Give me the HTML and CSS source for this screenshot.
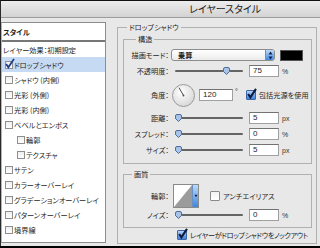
FILE: index.html
```html
<!DOCTYPE html>
<html>
<head>
    <meta charset="utf-8">
    <title>レイヤースタイル</title>
    <link rel="stylesheet" href="styles.css">
</head>
<body>
    <div class="window">
        <div class="titlebar">レイヤースタイル</div>
        <div class="main">
            <div class="styles">
                <div class="styles-head">スタイル</div>
                <div class="style-item plain">レイヤー効果：初期設定</div>
                <div class="style-item selected">
                    <span class="box"><svg class="tick" viewBox="0 0 8 8"><path d="M1 3.5 L3 6.5 L8 -1"/></svg></span>ドロップシャドウ
                </div>
                <div class="style-item"><span class="box"></span>シャドウ (内側)</div>
                <div class="style-item"><span class="box"></span>光彩 (外側)</div>
                <div class="style-item"><span class="box"></span>光彩 (内側)</div>
                <div class="style-item"><span class="box"></span>ベベルとエンボス</div>
                <div class="style-item indent"><span class="box"></span>輪郭</div>
                <div class="style-item indent"><span class="box"></span>テクスチャ</div>
                <div class="style-item"><span class="box"></span>サテン</div>
                <div class="style-item"><span class="box"></span>カラーオーバーレイ</div>
                <div class="style-item"><span class="box"></span>グラデーションオーバーレイ</div>
                <div class="style-item"><span class="box"></span>パターンオーバーレイ</div>
                <div class="style-item"><span class="box"></span>境界線</div>
            </div>

            <div class="options">
                <fieldset class="group">
                    <legend>ドロップシャドウ</legend>

                    <fieldset class="sub sub-structure">
                        <legend>構造</legend>
                        <div class="rows">
                            <div class="row">
                                <span class="label">描画モード：</span>
                                <div class="select">
                                    <span class="select-text">乗算</span>
                                    <span class="stepper"><svg viewBox="0 0 5 9"><path d="M2.5 0.5 L4.5 3.5 H0.5 Z M2.5 8.5 L4.5 5.5 H0.5 Z"/></svg></span>
                                </div>
                                <span class="swatch"></span>
                            </div>
                            <div class="row">
                                <span class="label">不透明度：</span>
                                <div class="slider"><div class="travel"><svg class="thumb" style="left: 75%" viewBox="0 0 7 8"><path d="M3.5 7.5 L0.5 4.5 V2 Q0.5 0.5 2 0.5 H5 Q6.5 0.5 6.5 2 V4.5 Z"/></svg></div></div>
                                <span class="field">75</span>
                                <span class="unit">%</span>
                            </div>
                            <div class="row row-angle">
                                <span class="label">角度：</span>
                                <svg class="dial" viewBox="0 0 23 23">
                                    <defs>
                                        <radialGradient id="dialFill" cx="40%" cy="35%" r="70%">
                                            <stop offset="0" stop-color="#ffffff"/>
                                            <stop offset="1" stop-color="#d6d6d6"/>
                                        </radialGradient>
                                    </defs>
                                    <circle cx="11.5" cy="11.5" r="11" fill="url(#dialFill)" stroke="#9a9a9a"/>
                                    <line x1="11.5" y1="11.5" x2="7" y2="3.7" stroke="#4a4a4a"/>
                                    <circle cx="11.5" cy="11.5" r="0.9" fill="#4a4a4a"/>
                                </svg>
                                <span class="field field-angle">120</span>
                                <span class="degree">°</span>
                                <span class="check-label global">
                                    <span class="aqua checked"><svg class="tick" viewBox="0 0 8 8"><path d="M1 3.5 L3 6.5 L8 -1"/></svg></span>包括光源を使用
                                </span>
                            </div>
                            <div class="row">
                                <span class="label">距離：</span>
                                <div class="slider"><div class="travel"><svg class="thumb" style="left: 0%" viewBox="0 0 7 8"><path d="M3.5 7.5 L0.5 4.5 V2 Q0.5 0.5 2 0.5 H5 Q6.5 0.5 6.5 2 V4.5 Z"/></svg></div></div>
                                <span class="field">5</span>
                                <span class="unit">px</span>
                            </div>
                            <div class="row">
                                <span class="label">スプレッド：</span>
                                <div class="slider"><div class="travel"><svg class="thumb" style="left: 0%" viewBox="0 0 7 8"><path d="M3.5 7.5 L0.5 4.5 V2 Q0.5 0.5 2 0.5 H5 Q6.5 0.5 6.5 2 V4.5 Z"/></svg></div></div>
                                <span class="field">0</span>
                                <span class="unit">%</span>
                            </div>
                            <div class="row">
                                <span class="label">サイズ：</span>
                                <div class="slider"><div class="travel"><svg class="thumb" style="left: 0%" viewBox="0 0 7 8"><path d="M3.5 7.5 L0.5 4.5 V2 Q0.5 0.5 2 0.5 H5 Q6.5 0.5 6.5 2 V4.5 Z"/></svg></div></div>
                                <span class="field">5</span>
                                <span class="unit">px</span>
                            </div>
                        </div>
                    </fieldset>

                    <fieldset class="sub sub-quality">
                        <legend>画質</legend>
                        <div class="rows">
                            <div class="row row-contour">
                                <span class="label">輪郭：</span>
                                <div class="contour">
                                    <svg class="contour-curve" viewBox="0 0 20 22" preserveAspectRatio="none">
                                        <rect width="20" height="22" fill="#ffffff"/>
                                        <polygon points="0,22 20,0 20,22" fill="#9b9b9b"/>
                                    </svg>
                                    <span class="contour-arrow"><svg viewBox="0 0 5 4"><path d="M0.5 0.5 H4.5 L2.5 3.5 Z"/></svg></span>
                                </div>
                                <span class="check-label antialias">
                                    <span class="aqua"></span>アンチエイリアス
                                </span>
                            </div>
                            <div class="row">
                                <span class="label">ノイズ：</span>
                                <div class="slider"><div class="travel"><svg class="thumb" style="left: 0%" viewBox="0 0 7 8"><path d="M3.5 7.5 L0.5 4.5 V2 Q0.5 0.5 2 0.5 H5 Q6.5 0.5 6.5 2 V4.5 Z"/></svg></div></div>
                                <span class="field">0</span>
                                <span class="unit">%</span>
                            </div>
                        </div>
                    </fieldset>

                    <div class="check-label knockout">
                        <span class="aqua checked"><svg class="tick" viewBox="0 0 8 8"><path d="M1 3.5 L3 6.5 L8 -1"/></svg></span>レイヤーがドロップシャドウをノックアウト
                    </div>
                </fieldset>
            </div>
        </div>
    </div>
</body>
</html>
```

FILE: styles.css
```css
*, *:before, *:after {
    box-sizing: border-box;
}
html, body {
    margin: 0;
}
body {
    width: 320px;
    height: 248px;
    overflow: hidden;
    background: #000;
    font-family: "Noto Sans CJK JP", sans-serif;
    font-size: 7.2px;
    font-feature-settings: "palt";
    color: #1e1e1e;
}

/* window frame */
.window {
    height: 246px;
    display: flex;
    flex-direction: column;
    border-top: 1px solid #111;
    border-left: 1px solid #2a2a2a;
    background: #e8e8e8;
}
.titlebar {
    height: 17px;
    line-height: 16px;
    padding-left: 188px;
    font-size: 10px;
    color: #222;
    border-bottom: 1px solid #9c9c9c;
    background: linear-gradient(#ededed, #d3d3d3);
}
.main {
    flex: 1;
    min-height: 0;
    display: flex;
    padding: 4px 0 3px;
}

/* style list on the left */
.styles {
    width: 105px;
    flex: none;
    background: #fff;
    border: 1px solid #8c8c8c;
    border-left-color: #b4b4b4;
}
.styles-head {
    height: 19px;
    line-height: 18px;
    padding-left: 1px;
    font-weight: bold;
    border-bottom: 2px solid #777;
}
.style-item {
    height: 15px;
    display: flex;
    align-items: center;
    padding-left: 3px;
    white-space: nowrap;
}
.style-item.plain {
    padding-left: 1px;
}
.style-item.indent {
    padding-left: 15px;
}
.style-item.selected {
    background: #c7daf4;
}
.box {
    width: 8px;
    height: 8px;
    flex: none;
    margin-right: 1px;
    position: relative;
    border: 1px solid #8e8e8e;
    background: linear-gradient(#efefef, #fff);
}
.tick {
    position: absolute;
    left: -1px;
    top: -2px;
    width: 9px;
    height: 9px;
    overflow: visible;
}
.tick path {
    fill: none;
    stroke: #1f3c8c;
    stroke-width: 1.6;
}

/* options on the right */
.options {
    flex: 1;
    display: flex;
    flex-direction: column;
    padding: 0 3px 0 11px;
}
fieldset {
    margin: 0;
    padding: 0;
    min-width: 0;
    border: 1px solid #b0b0b0;
}
legend {
    height: 10px;
    line-height: 10px;
    padding: 0 2px;
}
.group {
    flex: 1;
    padding: 2px 4px 3px 5px;
}
.group > legend {
    margin-left: 4px;
}
.sub {
    padding: 4px 0 6px;
}
.sub-structure > legend {
    margin-left: 12px;
}
.sub-quality {
    margin-top: 5px;
    padding: 5px 0 5px;
}
.sub-quality > legend {
    margin-left: 8px;
}
.rows {
    display: flex;
    flex-direction: column;
    gap: 2px;
}
.sub-quality .rows {
    gap: 0;
}
.row {
    height: 14px;
    display: flex;
    align-items: center;
    white-space: nowrap;
}
.row-angle {
    height: 24px;
    margin: 3px 0 2px;
}
.row-contour {
    height: 24px;
}
.label {
    width: 45px;
    flex: none;
    text-align: right;
}

.select {
    width: 104px;
    height: 12px;
    margin-left: 2px;
    display: flex;
    align-items: center;
    overflow: hidden;
    font-weight: bold;
    border: 1px solid #8d8d8d;
    border-radius: 3px;
    background: linear-gradient(#fff, #ebebeb);
}
.select-text {
    flex: 1;
    padding-left: 6px;
}
.stepper {
    width: 9px;
    align-self: stretch;
    display: flex;
    align-items: center;
    justify-content: center;
    border-left: 1px solid #6a8fc2;
    background: linear-gradient(#bcd9f9, #3f86e0);
}
.stepper svg {
    width: 5px;
    height: 9px;
}
.stepper path {
    fill: #13254d;
}
.swatch {
    width: 23px;
    height: 11px;
    margin-left: 5px;
    background: #000;
    border: 1px solid #555;
}

.slider {
    width: 72px;
    height: 10px;
    margin-left: 4px;
    padding: 0 2px;
    position: relative;
}
.slider:before {
    content: '';
    position: absolute;
    left: 2px;
    right: 2px;
    top: 4px;
    height: 2px;
    border-radius: 1px;
    background: #646464;
}
.travel {
    width: 64px;
    height: 10px;
    position: relative;
}
.thumb {
    position: absolute;
    top: 1px;
    width: 7px;
    height: 8px;
}
.thumb path {
    fill: #a8c3e8;
    stroke: #4d6d9b;
    stroke-width: 1;
}
.field {
    width: 30px;
    height: 12px;
    margin-left: 4px;
    padding-left: 3px;
    font-family: "Liberation Sans", sans-serif;
    font-size: 8px;
    line-height: 10px;
    background: #fff;
    border: 1px solid #a0a0a0;
    border-top-color: #727272;
}
.unit {
    margin-left: 3px;
    font-family: "Liberation Sans", sans-serif;
    font-size: 7px;
    color: #333;
}

.dial {
    width: 23px;
    height: 23px;
    margin-left: 3px;
    flex: none;
}
.field-angle {
    width: 34px;
}
.degree {
    align-self: flex-start;
    margin: 5px 0 0 2px;
    font-family: "Liberation Sans", sans-serif;
    font-size: 7px;
}

.check-label {
    display: flex;
    align-items: center;
    white-space: nowrap;
}
.global {
    margin-left: 8px;
}
.antialias {
    margin-left: 11px;
}
.knockout {
    height: 10px;
    margin: 2px 0 0 54px;
    letter-spacing: -0.4px;
}
.aqua {
    width: 10px;
    height: 10px;
    flex: none;
    margin-right: 3px;
    position: relative;
    border: 1px solid #8a8a8a;
    border-radius: 1px;
    background: linear-gradient(#f2f2f2, #fff);
}
.aqua.checked {
    border-color: #3d64a6;
    background: linear-gradient(#b5d3f7, #3d82de);
}
.aqua .tick {
    left: 0;
    top: -1px;
}
.aqua .tick path {
    stroke: #0d1a3a;
    stroke-width: 1.8;
}

.contour {
    width: 26px;
    height: 24px;
    margin-left: 4px;
    display: flex;
    border: 1px solid #8a8a8a;
}
.contour-curve {
    flex: 1;
    height: 100%;
}
.contour-arrow {
    width: 6px;
    display: flex;
    align-items: center;
    justify-content: center;
    border-left: 1px solid #6a8fc2;
    background: linear-gradient(#bcd9f9, #3f86e0);
}
.contour-arrow svg {
    width: 4px;
    height: 4px;
}
.contour-arrow path {
    fill: #13254d;
}
```
